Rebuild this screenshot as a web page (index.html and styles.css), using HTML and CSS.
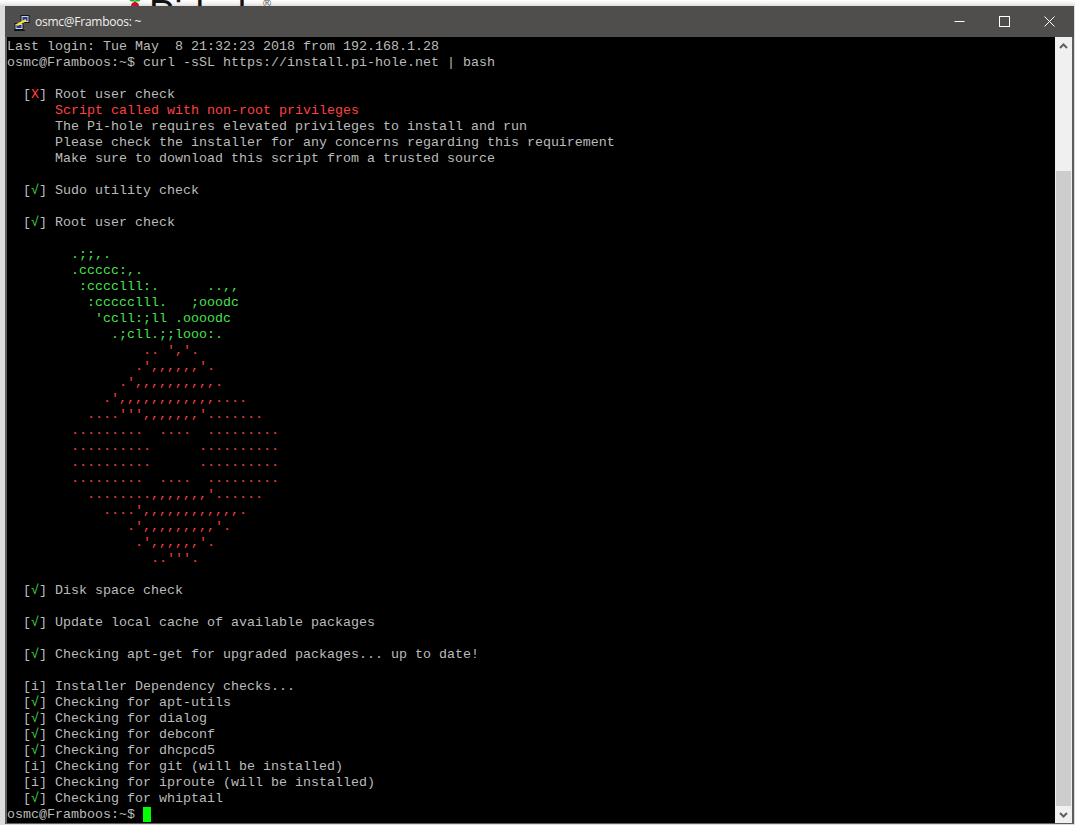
FILE: index.html
```html
<!DOCTYPE html>
<html lang="en">
<head>
<meta charset="utf-8">
<title>osmc@Framboos: ~</title>
<link rel="stylesheet" href="styles.css">
</head>
<body>
<div class="backdrop">
<svg class="berry" width="18" height="8" viewBox="0 0 18 8"><path d="M1 0h6l2 3 2-3h6l-4 3.500h-3L9 5 8 3.500H5z" fill="#1fb32a"/><path d="M5 8c0-3 2-4 4-4s4 1 4 4z" fill="#c8102e"/></svg>
<span class="brand">Pi-hole</span><span class="reg">®</span>
</div>
<main class="window">
<header class="titlebar">
<svg class="appicon" width="16" height="16" viewBox="0 0 16 16"><rect x="7" y="0.500" width="8" height="7" fill="#c9d4e6" stroke="#10141c"/><rect x="8.500" y="2" width="5" height="4" fill="#26388c"/><rect x="1" y="8.500" width="8" height="6" fill="#c9d4e6" stroke="#10141c"/><rect x="2.500" y="10" width="5" height="3" fill="#26388c"/><path d="M0 15.500h11" stroke="#10141c"/><path d="M3 10L12 5" stroke="#f6e032" stroke-width="2.500"/></svg>
<span class="title">osmc@Framboos: ~</span>
<div class="controls">
<span class="control"><svg width="11" height="11" viewBox="0 0 11 11"><path d="M0.500 5.500h10" stroke="#fff"/></svg></span>
<span class="control"><svg width="11" height="11" viewBox="0 0 11 11"><rect x="0.500" y="0.500" width="10" height="10" fill="none" stroke="#fff"/></svg></span>
<span class="control"><svg width="11" height="11" viewBox="0 0 11 11"><path d="M0.500 0.500l10 10M10.500 0.500l-10 10" stroke="#fff"/></svg></span>
</div>
</header>
<div class="body">
<pre class="term">Last login: Tue May  8 21:32:23 2018 from 192.168.1.28
osmc@Framboos:~$ curl -sSL https://install.pi-hole.net | bash

  [<span class="r">X</span>] Root user check
      <span class="r">Script called with non-root privileges</span>
      The Pi-hole requires elevated privileges to install and run
      Please check the installer for any concerns regarding this requirement
      Make sure to download this script from a trusted source

  [<span class="g">√</span>] Sudo utility check

  [<span class="g">√</span>] Root user check

<span class="g">        .;;,.
        .ccccc:,.
         :cccclll:.      ..,,
          :ccccclll.   ;ooodc
           'ccll:;ll .oooodc
             .;cll.;;looo:.</span>
<span class="r">                 .. ','.
                .',,,,,,'.
              .',,,,,,,,,,.
            .',,,,,,,,,,,,....
          ....''',,,,,,,'.......
        .........  ....  .........
        ..........      ..........
        ..........      ..........
        .........  ....  .........
          ........,,,,,,,'......
            ....',,,,,,,,,,,,.
               .',,,,,,,,,'.
                .',,,,,,'.
                  ..'''.</span>

  [<span class="g">√</span>] Disk space check

  [<span class="g">√</span>] Update local cache of available packages

  [<span class="g">√</span>] Checking apt-get for upgraded packages... up to date!

  [i] Installer Dependency checks...
  [<span class="g">√</span>] Checking for apt-utils
  [<span class="g">√</span>] Checking for dialog
  [<span class="g">√</span>] Checking for debconf
  [<span class="g">√</span>] Checking for dhcpcd5
  [i] Checking for git (will be installed)
  [i] Checking for iproute (will be installed)
  [<span class="g">√</span>] Checking for whiptail
osmc@Framboos:~$ <span class="cursor"> </span></pre>
<aside class="scrollbar">
<span class="arrow"><svg width="9" height="6" viewBox="0 0 9 6"><path d="M1 5l3.500-3.500L8 5" fill="none" stroke="#606060" stroke-width="2"/></svg></span>
<div class="track"><div class="thumb"></div></div>
<span class="arrow"><svg width="9" height="6" viewBox="0 0 9 6"><path d="M1 1l3.500 3.500L8 1" fill="none" stroke="#606060" stroke-width="2"/></svg></span>
</aside>
</div>
</main>
</body>
</html>
```
FILE: styles.css
```css
* { box-sizing: border-box; }
html, body { margin: 0; height: 825px; overflow: hidden; }
body {
  width: 1075px;
  background: linear-gradient(#ffffff 0, #f4f4f4 3px, #dcdcdc 6px);
  position: relative;
  padding: 6px 1px 0 5px;
}
.backdrop {
  position: absolute;
  left: 0; top: 0;
  width: 100%;
  height: 6px;
  overflow: hidden;
}
.berry { position: absolute; left: 126px; top: -2px; }
.brand {
  position: absolute;
  left: 149px; top: -5px;
  font: 38px/38px "Liberation Sans", sans-serif;
  color: #111;
}
.reg {
  position: absolute;
  left: 263px; top: -3px;
  font: 11px/12px "Liberation Sans", sans-serif;
  color: #555;
}
.window {
  width: 1069px;
  height: 818px;
  display: flex;
  flex-direction: column;
  background: #4f4e4c;
  border: 2px solid #5d5d5d;
  border-top: 0;
  border-bottom-width: 1px;
  position: relative;
}
.titlebar {
  height: 31px;
  flex: none;
  display: flex;
  align-items: center;
  background: #4f4e4c;
  margin: 0 -2px;
  padding-left: 9px;
}
.appicon { flex: none; margin: 2px 0 0 0; }
.title {
  margin-left: 5px;
  font: 12px/16px "Open Sans", sans-serif;
  letter-spacing: -0.25px;
  color: #f0f0f0;
}
.controls { margin-left: auto; display: flex; margin-right: 2px; }
.control {
  width: 45px;
  height: 31px;
  display: flex;
  align-items: center;
  justify-content: center;
}
.body { flex: 1; min-height: 0; display: flex; background: #000; }
.term {
  flex: 1;
  min-width: 0;
  margin: 0;
  padding-top: 2px;
  font: 13.333px/16px "Liberation Mono", monospace;
  color: #bbbbbb;
  background: #000;
  overflow: hidden;
  white-space: pre;
}
.g { color: #49e04f; }
.r { color: #ff4040; }
.cursor { background: #00ff00; }
.scrollbar {
  width: 17px;
  flex: none;
  display: flex;
  flex-direction: column;
  background: #f0f0f0;
}
.arrow {
  height: 17px;
  flex: none;
  display: flex;
  align-items: center;
  justify-content: center;
}
.track { flex: 1; padding-top: 117px; display: flex; }
.thumb { flex: 1; background: #cdcdcd; margin: 0 1px; }
```
